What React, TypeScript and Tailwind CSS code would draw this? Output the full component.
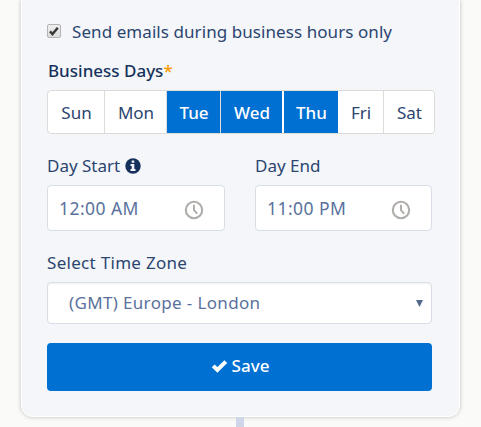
import React from "react";

const days = [
  { name: "Sun", cell: "w-[57px] border-r border-[#dddbda]" },
  { name: "Mon", cell: "w-[62px] border-r border-[#dddbda]" },
  { name: "Tue", cell: "w-[54px] border-r border-[#dddbda] bg-[#0070d2] text-white font-medium" },
  { name: "Wed", cell: "w-[63px] border-r-2 border-white bg-[#0070d2] text-white font-medium" },
  { name: "Thu", cell: "w-[54px] bg-[#0070d2] text-white font-medium" },
  { name: "Fri", cell: "w-[46px] border-r border-[#dddbda]" },
  { name: "Sat", cell: "w-[50px]" },
];

function Clock() {
  return (
    <svg className="mt-1 h-5 w-5" viewBox="0 0 20 20" fill="none" stroke="#b0adab" strokeLinecap="round">
      <circle cx="10" cy="10" r="8.2" strokeWidth="2.1" />
      <path d="M10 5.6v4.6l2.6 3" strokeWidth="2" strokeLinejoin="round" />
    </svg>
  );
}

function TimeField({ value, width }: { value: string; width: string }) {
  return (
    <div className={`flex h-[46px] items-center justify-between rounded-[4px] border border-[#d8dde6] bg-white pl-[11px] pr-5 text-[#5a719c] ${width}`}>
      <span className="pb-px text-[17.5px] tracking-[0.45px]">{value}</span>
      <Clock />
    </div>
  );
}

export default function App() {
  return (
    <div className="flex h-[427px] w-[481px] flex-col items-center overflow-hidden bg-[#fafaf9] font-['Noto_Sans','Open_Sans',sans-serif] text-[17px] leading-6 font-normal whitespace-nowrap text-[#2b456f]">
      <div className="h-[417px] w-[439px] shrink-0 rounded-b-[12px] border border-t-0 border-white bg-[#f4f6fa] pl-[25px] shadow-[0_0_4px_rgba(0,0,0,0.25)]">
        <label className="flex h-12 items-center pt-[14px]">
          <span className="flex h-[14px] w-[14px] items-center justify-center rounded-[2px] border border-[#b4b4b4] bg-linear-to-b from-[#eeeeee] to-[#dddddd]">
            <svg className="h-3 w-3" viewBox="0 0 12 12" fill="none">
              <path d="M2 6.3l2.5 2.8L9.8 2.7" stroke="#3b3b3b" strokeWidth="2.5" />
            </svg>
          </span>
          <span className="ml-[11px] pt-px tracking-[0.07px]">Send emails during business hours only</span>
        </label>
        <div className="mt-[11px] h-[31px] pl-px font-medium text-[#16325c]">
          Business Days<span className="text-[#ff9a00]">*</span>
        </div>
        <div className="flex h-11 w-[388px] overflow-hidden rounded-[4px] border border-[#dddbda] bg-white">
          {days.map((d) => (
            <div key={d.name} className={`flex shrink-0 items-center justify-center pt-0.5 pl-px ${d.cell}`}>
              {d.name}
            </div>
          ))}
        </div>
        <div className="mt-5 flex h-[31px]">
          <div className="flex w-[208px] gap-[5px]">
            <span>Day Start</span>
            <svg className="mt-1 h-4 w-4" viewBox="0 0 16 16">
              <circle cx="8" cy="8" r="7.7" fill="#16325c" />
              <path d="M6.7 2.5h2.6v2.2H6.7zM5.5 6h3.8v5h1.2v2h-5v-2h1.2V8H5.5z" fill="#f4f6fa" />
            </svg>
          </div>
          <span>Day End</span>
        </div>
        <div className="flex gap-[30px]">
          <TimeField value="12:00 AM" width="w-[178px]" />
          <TimeField value="11:00 PM" width="w-[177px]" />
        </div>
        <div className="mt-5 h-[31px] tracking-[0.3px]">Select Time Zone</div>
        <div className="flex h-[42px] w-[385px] items-center justify-between rounded-[4px] border border-[#d8dde6] bg-white pr-[8px] pl-5 text-[#5a719c] shadow-[inset_0_1px_2px_rgba(0,0,0,0.06)]">
          <span className="pl-px tracking-[0.35px]">(GMT) Europe - London</span>
          <svg className="h-[7px] w-[7px]" viewBox="0 0 7 7">
            <path d="M0 0h7L3.5 7z" fill="#54698d" />
          </svg>
        </div>
        <button className="mt-[19px] flex h-12 w-[385px] items-center justify-center gap-1 rounded-[4px] bg-[#0070d2] pb-0.5 pl-px font-medium text-white">
          <svg className="h-[14px] w-[17px]" viewBox="0 0 17 14">
            <path d="M2.2 6.8L6.4 11L14.8 2.6" fill="none" stroke="white" strokeWidth="4" />
          </svg>
          <span>Save</span>
        </button>
      </div>
      <div className="mr-px h-[10px] w-2 shrink-0 bg-[#ced6e8]" />
    </div>
  );
}
